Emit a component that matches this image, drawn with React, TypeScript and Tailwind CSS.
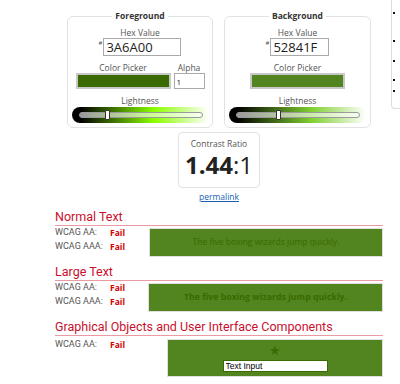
import React from "react";

const fg = "#3A6A00";
const bg = "#52841F";

function Slider({ peak, pos, w }: { peak: string; pos: number; w: string }) {
  return (
    <div
      className={`${w} h-[16px] rounded-full flex items-center pl-[7px] pr-[6px]`}
      style={{ background: `linear-gradient(to right, #000 6%, ${peak} 60%, #fff 100%)` }}
    >
      <div className="relative flex-1 h-[6px] rounded-full border border-[#9a9a9a] bg-white/60">
        <div
          className="absolute top-[-3px] w-[5px] h-[10px] bg-white border border-[#333] rounded-[1px]"
          style={{ left: `${pos}%` }}
        />
      </div>
    </div>
  );
}

function Row({ label }: { label: string }) {
  return (
    <div className="flex h-[14px] items-center">
      <span className="w-[55px] font-['Roboto',sans-serif] text-[9px] text-[#555]">{label}</span>
      <span className="text-[8.5px] font-bold text-[#d00000]">Fail</span>
    </div>
  );
}

function Heading({ children }: { children: React.ReactNode }) {
  return (
    <div className="mt-[7px] h-[17px] border-b border-[#ea9aa2] font-['Roboto',sans-serif] text-[12.5px] leading-[16px] text-[#c8102e]">
      {children}
    </div>
  );
}

export default function App() {
  return (
    <div className="flex w-[400px] h-[384px] overflow-hidden bg-white font-['Open_Sans',sans-serif] text-[#333]">
      <div className="ml-[55px] w-[328px] shrink-0 pt-[10px]">
        {/* color pickers */}
        <div className="flex justify-center gap-[11px]">
          <fieldset className="w-[146px] h-[118px] border border-[#e2e2e2] rounded-[6px]">
            <legend className="mx-auto px-[3px] text-[8.5px] font-bold leading-[12px]">Foreground</legend>
            <div className="flex flex-col items-center">
              <div className="mt-[6px] text-[8.5px] leading-[10px] text-[#555]">Hex Value</div>
              <div className="flex items-start">
                <span className="mt-[2px] mr-[1px] text-[6px] leading-[6px] text-[#555]">#</span>
                <input
                  readOnly
                  value="3A6A00"
                  className="w-[78px] h-[18px] border border-[#aaa] px-[2px] text-[13px] leading-[16px] text-[#222] outline-none"
                />
              </div>
              <div className="mt-[7px] flex gap-[3px]">
                <div className="flex flex-col items-center">
                  <div className="text-[8.5px] leading-[10px] text-[#555]">Color Picker</div>
                  <div className="w-[95px] h-[16px] border-2 border-[#c8c8c8]" style={{ background: fg }} />
                </div>
                <div className="flex flex-col items-center">
                  <div className="text-[8.5px] leading-[10px] text-[#555]">Alpha</div>
                  <input
                    readOnly
                    value="1"
                    className="w-[31px] h-[16px] border border-[#aaa] px-[2px] text-[8px] text-[#222] outline-none"
                  />
                </div>
              </div>
              <div className="mt-[7px] text-[8.5px] leading-[10px] text-[#555]">Lightness</div>
              <div className="mt-[1px] self-stretch pl-[4px]">
                <Slider peak="#8cff00" pos={20.8} w="w-[137px]" />
              </div>
            </div>
          </fieldset>

          <fieldset className="w-[147px] h-[118px] border border-[#e2e2e2] rounded-[6px]">
            <legend className="mx-auto px-[3px] text-[8.5px] font-bold leading-[12px]">Background</legend>
            <div className="flex flex-col items-center">
              <div className="mt-[6px] text-[8.5px] leading-[10px] text-[#555]">Hex Value</div>
              <div className="flex items-start">
                <span className="mt-[2px] mr-[1px] text-[6px] leading-[6px] text-[#555]">#</span>
                <input
                  readOnly
                  value="52841F"
                  className="w-[59px] h-[18px] border border-[#aaa] px-[2px] text-[13px] leading-[16px] text-[#222] outline-none"
                />
              </div>
              <div className="mt-[7px] flex flex-col items-center">
                <div className="text-[8.5px] leading-[10px] text-[#555]">Color Picker</div>
                <div className="w-[95px] h-[16px] border-2 border-[#c8c8c8]" style={{ background: bg }} />
              </div>
              <div className="mt-[7px] text-[8.5px] leading-[10px] text-[#555]">Lightness</div>
              <div className="mt-[1px] self-stretch pl-[4px]">
                <Slider peak="#80cf30" pos={32} w="w-[137px]" />
              </div>
            </div>
          </fieldset>
        </div>

        {/* contrast ratio */}
        <div className="mx-auto mt-[4px] w-[82px] h-[56px] border border-[#e2e2e2] rounded-[4px] flex flex-col items-center pt-[6px]">
          <div className="text-[8.5px] leading-[10px] text-[#555]">Contrast Ratio</div>
          <div className="mt-[3px] text-[24px] leading-[26px] text-[#222]">
            <span className="font-bold">1.44</span>:1
          </div>
        </div>
        <div className="mt-[4px] text-center text-[8.5px] leading-[10px]">
          <span className="text-[#1a5fb4] underline">permalink</span>
        </div>

        {/* Normal text */}
        <Heading>Normal Text</Heading>
        <div className="flex">
          <div className="w-[94px] shrink-0">
            <Row label="WCAG AA:" />
            <Row label="WCAG AAA:" />
          </div>
          <div
            className="mt-[2px] flex-1 h-[29px] border border-[#e0e0e0] flex items-center justify-center text-[8.5px]"
            style={{ background: bg, color: fg }}
          >
            The five boxing wizards jump quickly.
          </div>
        </div>

        {/* Large text */}
        <Heading>Large Text</Heading>
        <div className="flex">
          <div className="w-[93px] shrink-0">
            <Row label="WCAG AA:" />
            <Row label="WCAG AAA:" />
          </div>
          <div
            className="mt-[2px] flex-1 h-[29px] border border-[#e0e0e0] flex items-center justify-center text-[8.75px] font-bold"
            style={{ background: bg, color: fg }}
          >
            The five boxing wizards jump quickly.
          </div>
        </div>

        {/* Graphical objects */}
        <Heading>Graphical Objects and User Interface Components</Heading>
        <div className="flex">
          <div className="w-[112px] shrink-0 pt-[2px]">
            <Row label="WCAG AA:" />
          </div>
          <div
            className="mt-[3px] flex-1 h-[38px] border border-[#e0e0e0] flex flex-col items-center pt-[4px]"
            style={{ background: bg }}
          >
            <span className="text-[13px] leading-[13px]" style={{ color: fg }}>★</span>
            <input
              readOnly
              value="Text Input"
              className="mt-[3px] w-[105px] h-[12px] bg-white px-[2px] font-['Liberation_Sans',sans-serif] text-[8.5px] leading-[10px] text-black outline-none border"
              style={{ borderColor: fg }}
            />
          </div>
        </div>
      </div>

      {/* side panel edge */}
      <div className="ml-[8px] w-[30px] h-[109px] shrink-0 border-l border-b border-[#dedede] rounded-bl-[4px] pl-[1px]">
        <div className="mt-[12px] w-[2px] h-[2px] bg-[#111]" />
        <div className="mt-[26px] w-[2px] h-[2px] bg-[#111]" />
        <div className="mt-[18px] w-[2px] h-[2px] bg-[#111]" />
        <div className="mt-[17px] w-[2px] h-[2px] bg-[#111]" />
        <div className="mt-[9px] w-[2px] h-[2px] bg-[#111]" />
      </div>
    </div>
  );
}
